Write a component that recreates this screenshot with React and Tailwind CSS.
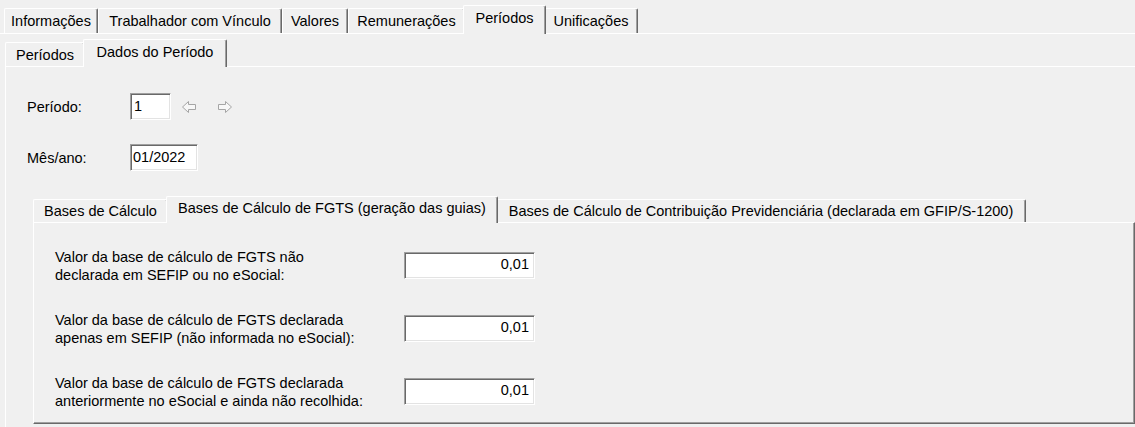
import clsx from 'clsx';

// Windows classic tab
function Tab({ label, w, active, h, ah }) {
  return (
    <div
      className={clsx(
        'flex items-center justify-center whitespace-nowrap border-l border-t border-white border-r border-r-[#696969] rounded-tl-[2px] rounded-tr-[2px] shadow-[inset_-1px_0_0_#a0a0a0] bg-[#f0f0f0]',
        w,
        active ? clsx('relative z-10 -mx-[2px] -mb-px pb-[2px]', ah) : clsx('pt-[2px]', h)
      )}
    >
      {label}
    </div>
  );
}

const sunken = 'border border-t-[#a0a0a0] border-l-[#a0a0a0] border-b-white border-r-white bg-white shadow-[inset_1px_1px_0_#696969,inset_-1px_-1px_0_#e3e3e3]';

function ArrowIcon({ flip }) {
  return (
    <svg width="16" height="14" viewBox="0 0 16 14" className={flip ? '-scale-x-100' : ''}>
      <polygon points="1.5,7 7.5,1.5 7.5,4.5 14.5,4.5 14.5,9.5 7.5,9.5 7.5,12.5" fill="#f7f7f7" stroke="#a5a5a5" strokeWidth="1" />
    </svg>
  );
}

function Field({ lines, value }) {
  return (
    <div className="flex items-center pl-[21px] h-[36px]">
      <div className="w-[349px] leading-[18px] pt-[2px]">
        {lines.map((l) => (<div key={l}>{l}</div>))}
      </div>
      <div className={clsx(sunken, 'w-[131px] h-[27px] flex items-center justify-end pr-[5px]')}>{value}</div>
    </div>
  );
}

export default function App() {
  return (
    <div className="w-[1135px] h-[427px] overflow-hidden bg-[#f0f0f0] text-black text-[14.5px] font-['Liberation_Sans',Arial,sans-serif]">
      {/* top tabs */}
      <div className="flex items-end h-[33px] pl-[4px]">
        <Tab label="Informações" w="w-[94px]" h="h-[25px]" />
        <Tab label="Trabalhador com Vínculo" w="w-[184px]" h="h-[25px]" />
        <Tab label="Valores" w="w-[66px]" h="h-[25px]" />
        <Tab label="Remunerações" w="w-[117px]" h="h-[25px]" />
        <Tab label="Períodos" w="w-[83px]" active ah="h-[29px]" />
        <Tab label="Unificações" w="w-[94px]" h="h-[25px]" />
      </div>

      <div className="border-t border-white">
        {/* sub tabs */}
        <div className="flex items-end h-[32px] pl-[5px]">
          <Tab label="Períodos" w="w-[80px]" h="h-[24px]" />
          <Tab label="Dados do Período" w="w-[144px]" active ah="h-[28px]" />
        </div>

        <div className="ml-[5px] border-l border-t border-white h-[400px]">
          <div className="flex items-center pl-[21px] mt-[26px]">
            <span className="w-[103px] pt-[2px]">Período:</span>
            <div className={clsx(sunken, 'w-[41px] h-[27px] flex items-center pl-[3px]')}>1</div>
            <div className="flex items-center gap-[20px] ml-[10px]">
              <ArrowIcon />
              <ArrowIcon flip />
            </div>
          </div>

          <div className="flex items-center pl-[21px] mt-[24px]">
            <span className="w-[103px] pt-[2px]">Mês/ano:</span>
            <div className={clsx(sunken, 'w-[68px] h-[27px] flex items-center pl-[2px]')}>01/2022</div>
          </div>

          {/* inner tabs */}
          <div className="flex items-end h-[28px] ml-[27px] mt-[23px]">
            <Tab label="Bases de Cálculo" w="w-[135px]" h="h-[23px]" />
            <Tab label="Bases de Cálculo de FGTS (geração das guias)" w="w-[332px]" active ah="h-[27px]" />
            <Tab label="Bases de Cálculo de Contribuição Previdenciária (declarada em GFIP/S-1200)" w="w-[530px]" h="h-[23px]" />
          </div>

          <div className="ml-[27px] w-[1102px] h-[202px] border-l border-t border-white border-r border-b border-r-[#696969] border-b-[#696969] shadow-[inset_-1px_-1px_0_#a0a0a0]">
            <div className="flex flex-col gap-[27px] pt-[24px]">
              <Field lines={['Valor da base de cálculo de FGTS não', 'declarada em SEFIP ou no eSocial:']} value="0,01" />
              <Field lines={['Valor da base de cálculo de FGTS declarada', 'apenas em SEFIP (não informada no eSocial):']} value="0,01" />
              <Field lines={['Valor da base de cálculo de FGTS declarada', 'anteriormente no eSocial e ainda não recolhida:']} value="0,01" />
            </div>
          </div>
        </div>
      </div>
    </div>
  );
}
